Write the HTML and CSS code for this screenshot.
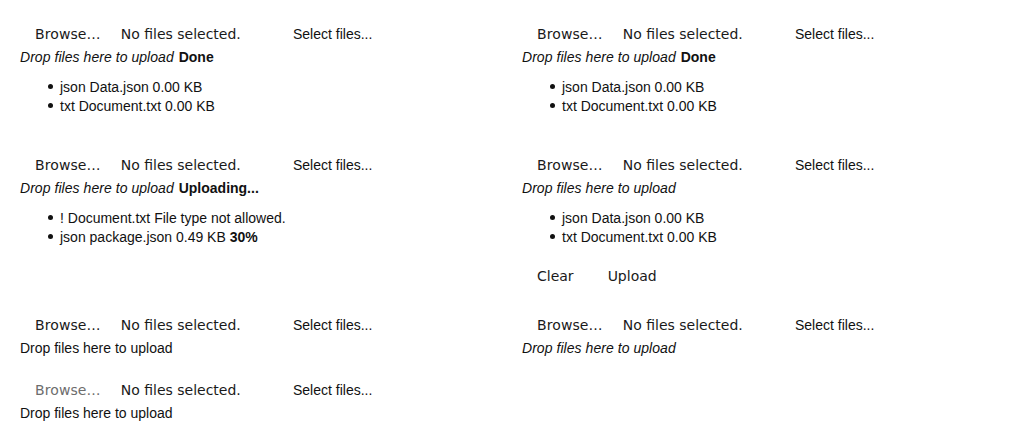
FILE: index.html
```html
<!DOCTYPE html>
<html>
<head>
<meta charset="utf-8">
<link rel="stylesheet" href="styles.css">
</head>
<body>
<div class="page">
  <div class="upload">
    <div class="btn-row"><span class="file-input"><span class="browse">Browse…</span><span class="nofile">No files selected.</span></span><span class="select">Select files...</span></div>
    <div class="drop"><em>Drop files here to upload</em> <strong class="status">Done</strong></div>
    <ul class="files"><li>json Data.json 0.00 KB</li><li>txt Document.txt 0.00 KB</li></ul>
  </div>
  <div class="upload">
    <div class="btn-row"><span class="file-input"><span class="browse">Browse…</span><span class="nofile">No files selected.</span></span><span class="select">Select files...</span></div>
    <div class="drop"><em>Drop files here to upload</em> <strong class="status">Done</strong></div>
    <ul class="files"><li>json Data.json 0.00 KB</li><li>txt Document.txt 0.00 KB</li></ul>
  </div>
  <div class="upload">
    <div class="btn-row"><span class="file-input"><span class="browse">Browse…</span><span class="nofile">No files selected.</span></span><span class="select">Select files...</span></div>
    <div class="drop"><em>Drop files here to upload</em> <strong class="status">Uploading...</strong></div>
    <ul class="files"><li>! Document.txt File type not allowed.</li><li>json package.json 0.49 KB <strong>30%</strong></li></ul>
  </div>
  <div class="upload">
    <div class="btn-row"><span class="file-input"><span class="browse">Browse…</span><span class="nofile">No files selected.</span></span><span class="select">Select files...</span></div>
    <div class="drop"><em>Drop files here to upload</em></div>
    <ul class="files"><li>json Data.json 0.00 KB</li><li>txt Document.txt 0.00 KB</li></ul>
    <div class="actions"><span class="action">Clear</span><span class="action">Upload</span></div>
  </div>
  <div class="upload">
    <div class="btn-row"><span class="file-input"><span class="browse">Browse…</span><span class="nofile">No files selected.</span></span><span class="select">Select files...</span></div>
    <div class="drop">Drop files here to upload</div>
  </div>
  <div class="upload">
    <div class="btn-row"><span class="file-input"><span class="browse">Browse…</span><span class="nofile">No files selected.</span></span><span class="select">Select files...</span></div>
    <div class="drop"><em>Drop files here to upload</em></div>
  </div>
  <div class="upload">
    <div class="btn-row"><span class="file-input"><span class="browse disabled">Browse…</span><span class="nofile">No files selected.</span></span><span class="select">Select files...</span></div>
    <div class="drop">Drop files here to upload</div>
  </div>
</div>
</body>
</html>
```
FILE: styles.css
```css
html, body {
  margin: 0;
  padding: 0;
  background: #fff;
}
body {
  font-family: "Liberation Sans", Arial, sans-serif;
  font-size: 14px;
  color: #000;
}
.page {
  display: grid;
  grid-template-columns: 502px 502px;
  row-gap: 19px;
  padding: 22px 0 0 20px;
  align-items: start;
}
.btn-row {
  display: flex;
  align-items: center;
  height: 24px;
}
.file-input {
  display: flex;
  align-items: center;
  width: 273px;
  font-family: "DejaVu Sans", sans-serif;
  font-size: 14px;
  color: #1a1a1a;
}
.browse {
  padding: 0 20px 0 15px;
  letter-spacing: 0.1px;
}
.browse.disabled {
  color: #6d6d6d;
}
.select {
  color: #111;
}
.drop {
  height: 22px;
  line-height: 22px;
  color: #111;
}
.drop em {
  letter-spacing: 0.05px;
}
.status {
  margin-left: 1px;
}
.files {
  margin: 10px 0 18px 0;
  padding-left: 40px;
  list-style: none;
}
.files li {
  line-height: 19px;
  color: #111;
}
.files li::before {
  content: "";
  display: inline-block;
  width: 5px;
  height: 5px;
  border-radius: 50%;
  background: #111;
  margin-left: -12px;
  margin-right: 7px;
  vertical-align: 3px;
}
.actions {
  display: flex;
  align-items: center;
  height: 22px;
  margin-bottom: 7px;
  font-family: "DejaVu Sans", sans-serif;
  font-size: 14px;
  color: #1a1a1a;
}
.action {
  padding: 0 15px;
}
.action + .action {
  margin-left: 4px;
}
```
